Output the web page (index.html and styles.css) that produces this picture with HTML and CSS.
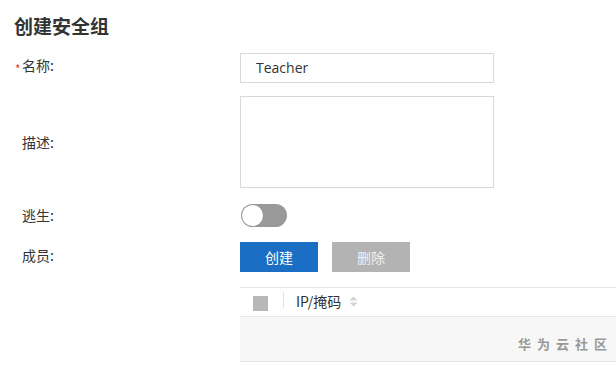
FILE: index.html
```html
<!DOCTYPE html>
<html lang="zh">
<head>
<meta charset="utf-8">
<link rel="stylesheet" href="styles.css">
</head>
<body>
<div class="page">
  <h1 class="title">创建安全组</h1>
  <div class="row row-name">
    <div class="label"><span class="req">*</span>名称:</div>
    <div class="field"><div class="input">Teacher</div></div>
  </div>
  <div class="row row-desc">
    <div class="label">描述:</div>
    <div class="field"><div class="textarea"></div></div>
  </div>
  <div class="row row-toggle">
    <div class="label">逃生:</div>
    <div class="field"><div class="toggle"><span class="knob"></span></div></div>
  </div>
  <div class="row row-members">
    <div class="label">成员:</div>
    <div class="field buttons">
      <button class="btn btn-primary">创建</button>
      <button class="btn btn-disabled">删除</button>
    </div>
  </div>
  <div class="table">
    <div class="thead">
      <div class="cell-check"><span class="checkbox"></span></div>
      <div class="divider"></div>
      <div class="th">IP/掩码
        <svg class="sort" width="9" height="11" viewBox="0 0 9 11"><path d="M4.5 0.5 L8.5 4.5 H0.5 Z" fill="#d2d2d2"/><path d="M4.5 10.5 L8.5 6.5 H0.5 Z" fill="#d2d2d2"/></svg>
      </div>
    </div>
    <div class="tbody-row">
      <span class="watermark">华为云社区</span>
    </div>
  </div>
</div>
</body>
</html>
```

FILE: styles.css
```css
* { box-sizing: border-box; }
html, body { margin: 0; padding: 0; background: #fff; }
body {
  font-family: "Noto Sans CJK SC", "Open Sans", sans-serif;
  color: #333;
  width: 616px;
  overflow: hidden;
}
.page {
  padding: 13px 0 0 14px;
}
.title {
  margin: 0;
  font-size: 19px;
  font-weight: bold;
  line-height: 26px;
  color: #333;
}
.row {
  display: flex;
  align-items: center;
}
.label {
  position: relative;
  width: 226px;
  padding-left: 8px;
  font-size: 14px;
  line-height: 20px;
  color: #333;
}
.req {
  position: absolute;
  left: 1px;
  top: 8px;
  color: #e0403a;
  font-size: 12px;
  line-height: 16px;
}
.row-name { margin-top: 14px; align-items: flex-start; }
.row-name .label { padding-top: 2px; }
.row-desc { margin-top: 13px; }
.row-toggle { margin-top: 12px; height: 30px; }
.row-members { margin-top: 12px; }
.row-members .label { margin-top: -4px; }
.input {
  width: 254px;
  height: 30px;
  border: 1px solid #d9d9d9;
  padding: 0 15px;
  font-family: "Open Sans", "Noto Sans CJK SC", sans-serif;
  font-size: 14px;
  line-height: 28px;
  color: #333;
}
.textarea {
  width: 254px;
  height: 92px;
  border: 1px solid #d9d9d9;
}
.toggle {
  width: 46px;
  height: 23px;
  border-radius: 12px;
  background: #999;
  position: relative;
  margin-left: 1px;
}
.knob {
  position: absolute;
  left: 1px;
  top: 1px;
  width: 21px;
  height: 21px;
  border-radius: 50%;
  background: #fff;
}
.buttons {
  display: flex;
  gap: 14px;
}
.btn {
  width: 78px;
  height: 30px;
  border: none;
  font-family: "Noto Sans CJK SC", sans-serif;
  font-size: 14px;
  color: #fff;
  padding: 0;
}
.btn-primary { background: #1a6fc4; }
.btn-disabled { background: #b3b3b3; color: #f0f0f0; }
.table {
  margin: 15px 0 0 226px;
  border-top: 1px solid #e6e6e6;
}
.thead {
  display: flex;
  align-items: center;
  height: 29px;
  border-bottom: 1px solid #e6e6e6;
}
.cell-check {
  width: 43px;
  padding-left: 13px;
  display: flex;
  align-items: center;
}
.checkbox {
  display: block;
  width: 15px;
  height: 15px;
  background: #b8b8b8;
  margin-top: 2px;
}
.divider {
  width: 1px;
  height: 16px;
  background: #e3e3e3;
  margin-top: -4px;
}
.th {
  margin-left: 12px;
  margin-top: -3px;
  font-size: 14px;
  line-height: 20px;
  color: #333;
  display: flex;
  align-items: center;
  gap: 8px;
}
.sort { margin-top: 1px; }
.tbody-row {
  height: 45px;
  background: #f7f7f7;
  border-bottom: 1px solid #e6e6e6;
  display: flex;
  align-items: center;
  justify-content: flex-end;
  padding-right: 9px;
}
.watermark {
  font-size: 13px;
  letter-spacing: 6px;
  margin-right: -6px;
  color: #999;
  font-weight: bold;
  padding-top: 8px;
}
```
